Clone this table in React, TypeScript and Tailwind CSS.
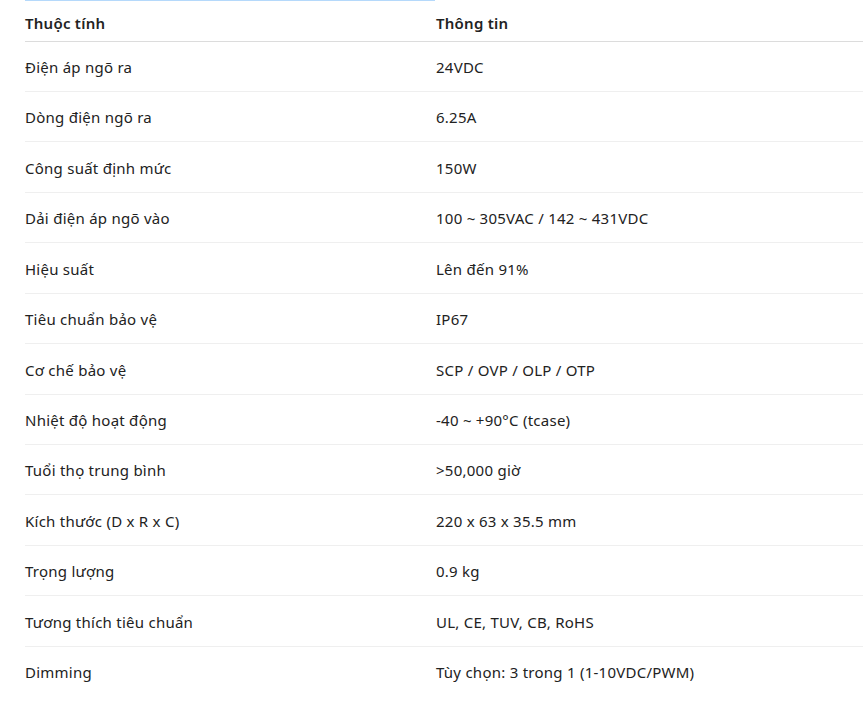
const rows: [string, string][] = [
  ['Điện áp ngõ ra', '24VDC'],
  ['Dòng điện ngõ ra', '6.25A'],
  ['Công suất định mức', '150W'],
  ['Dải điện áp ngõ vào', '100 ~ 305VAC / 142 ~ 431VDC'],
  ['Hiệu suất', 'Lên đến 91%'],
  ['Tiêu chuẩn bảo vệ', 'IP67'],
  ['Cơ chế bảo vệ', 'SCP / OVP / OLP / OTP'],
  ['Nhiệt độ hoạt động', '-40 ~ +90°C (tcase)'],
  ['Tuổi thọ trung bình', '>50,000 giờ'],
  ['Kích thước (D x R x C)', '220 x 63 x 35.5 mm'],
  ['Trọng lượng', '0.9 kg'],
  ['Tương thích tiêu chuẩn', 'UL, CE, TUV, CB, RoHS'],
  ['Dimming', 'Tùy chọn: 3 trong 1 (1-10VDC/PWM)'],
]

export default function App() {
  return (
    <div
      className="min-h-screen bg-white pl-[25px] text-[15px] tracking-[0.25px] text-[#222] overflow-hidden"
      style={{ fontFamily: '"Noto Sans", "Open Sans", sans-serif' }}
    >
      <div className="h-px w-[410px] bg-[#b5d9fb]" />
      <table className="w-[838px] border-collapse table-fixed">
        <thead>
          <tr className="h-[40px] border-b border-[#dcdcdc]">
            <th className="w-[411px] p-0 pt-[4px] text-left font-semibold">Thuộc tính</th>
            <th className="p-0 pt-[4px] text-left font-semibold">Thông tin</th>
          </tr>
        </thead>
        <tbody>
          {rows.map(([k, v], i) => (
            <tr
              key={k}
              className={`h-[50.45px] ${i < rows.length - 1 ? 'border-b border-[#efefef]' : ''}`}
            >
              <td className="p-0 pt-[2px]">{k}</td>
              <td className="p-0 pt-[2px]">{v}</td>
            </tr>
          ))}
        </tbody>
      </table>
    </div>
  )
}
